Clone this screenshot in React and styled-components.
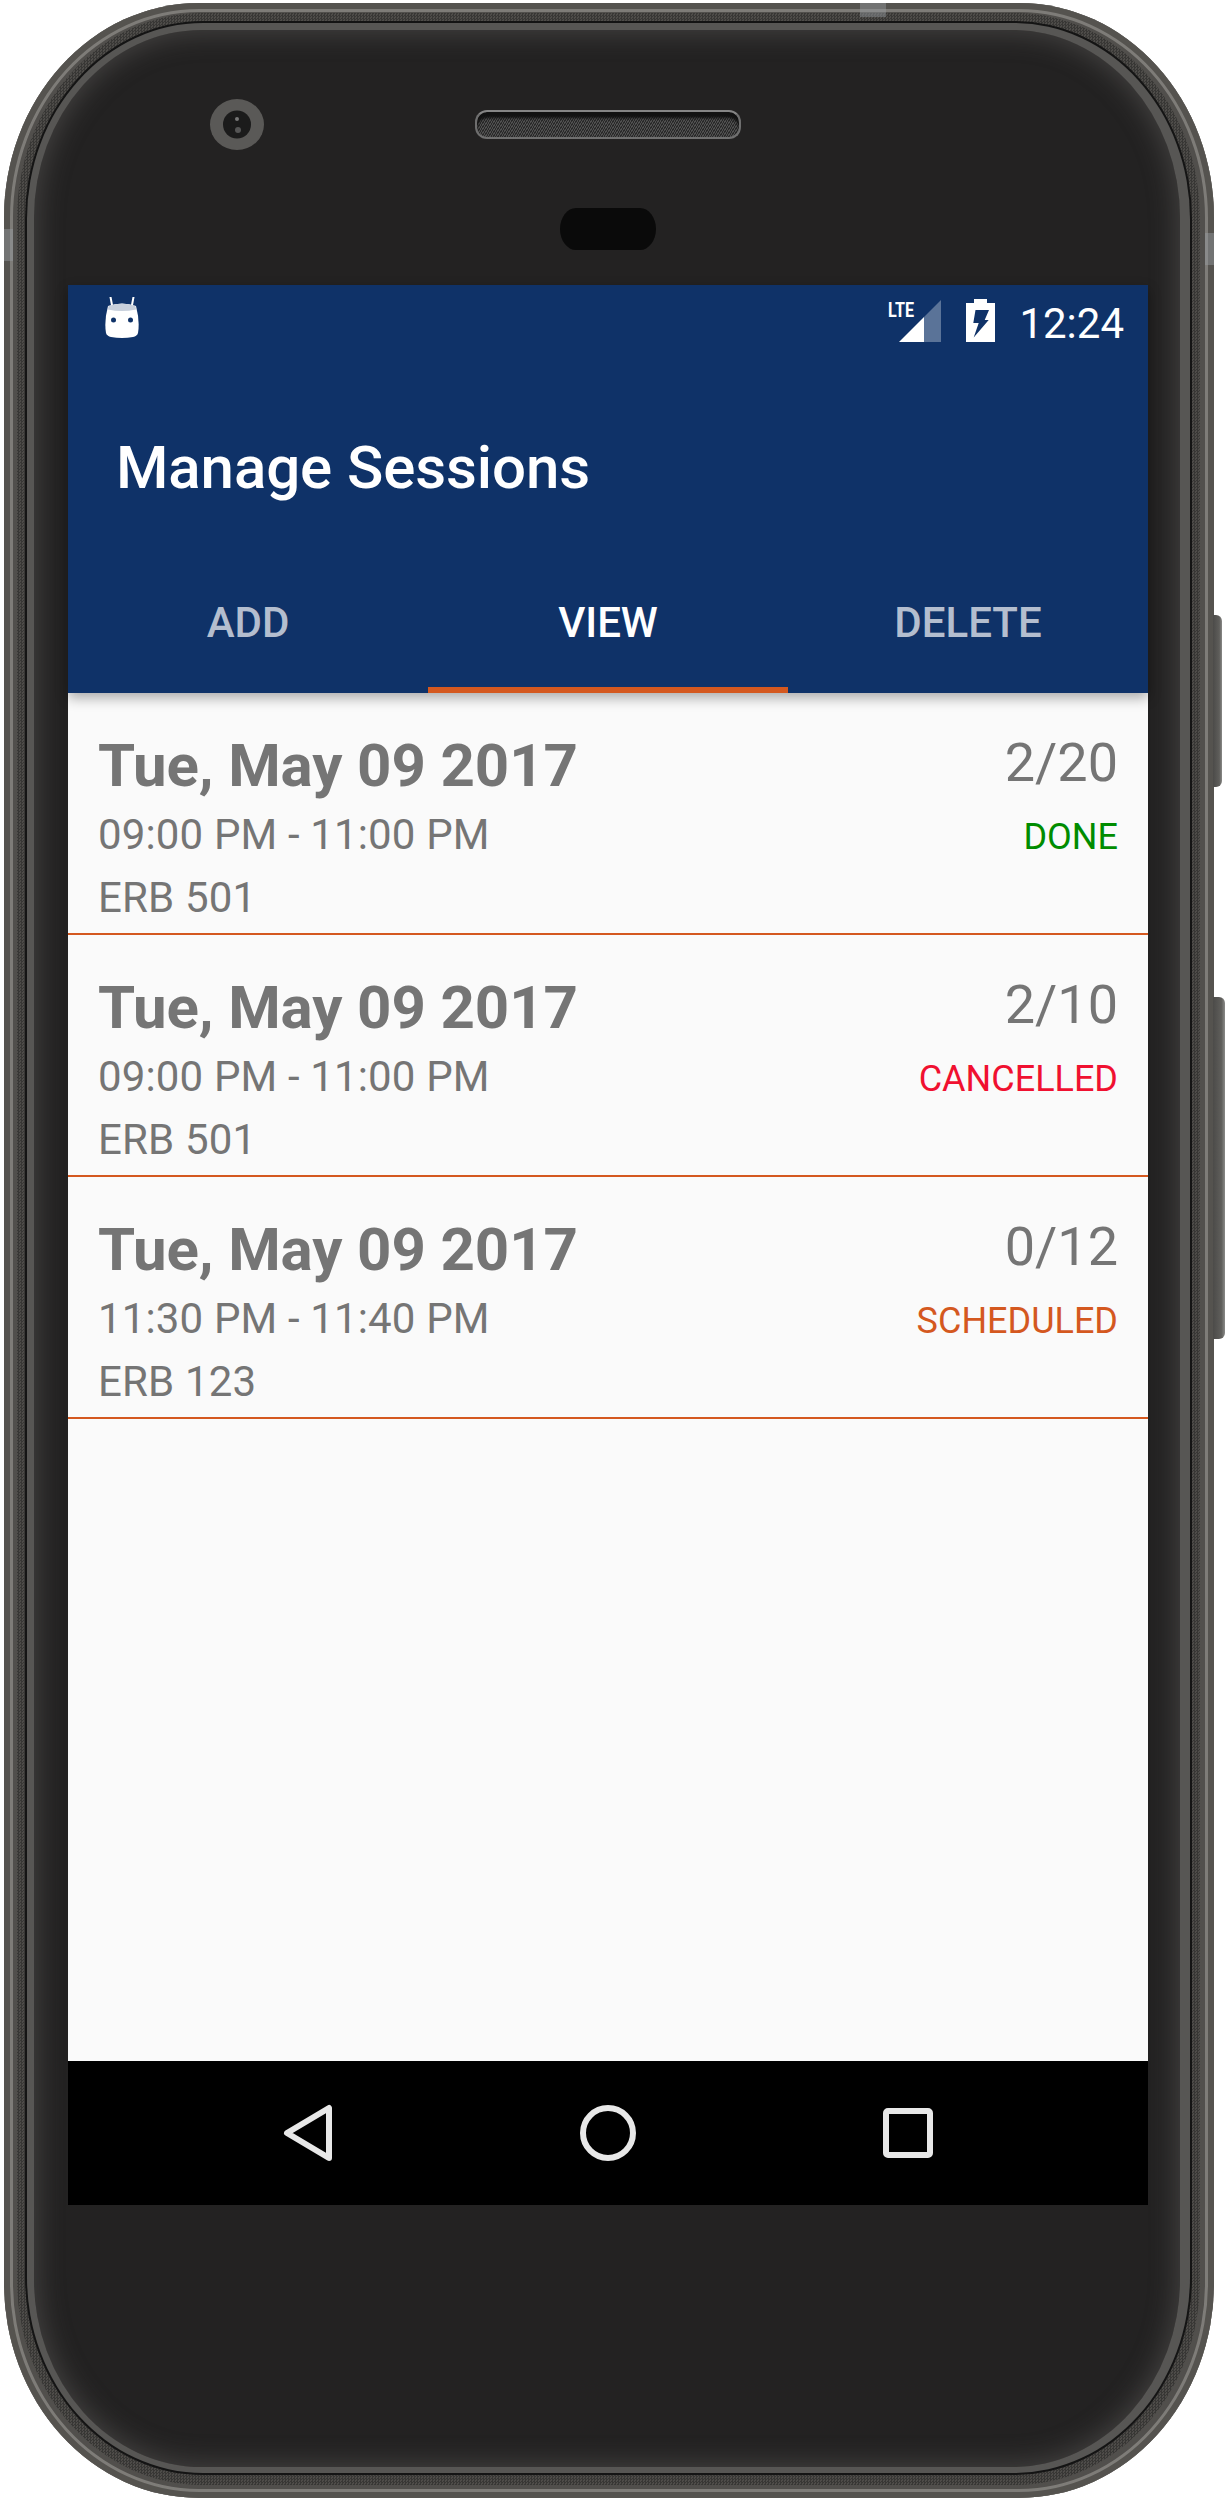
import React from 'react';
import styled, { createGlobalStyle } from 'styled-components';

const NAVY = '#0f3268';
const ORANGE = '#d4581f';
const GREY = '#757575';

const STATUS_COLORS = {
    DONE: '#008c00',
    CANCELLED: '#f01030',
    SCHEDULED: ORANGE,
};

const sessions = [
    { date: 'Tue, May 09 2017', time: '09:00 PM - 11:00 PM', room: 'ERB 501', count: '2/20', status: 'DONE' },
    { date: 'Tue, May 09 2017', time: '09:00 PM - 11:00 PM', room: 'ERB 501', count: '2/10', status: 'CANCELLED' },
    { date: 'Tue, May 09 2017', time: '11:30 PM - 11:40 PM', room: 'ERB 123', count: '0/12', status: 'SCHEDULED' },
];

const tabs = ['ADD', 'VIEW', 'DELETE'];

const GlobalStyle = createGlobalStyle`
    html, body {
        margin: 0;
        padding: 0;
        background: #fff;
    }
    * {
        box-sizing: border-box;
    }
`;

const Page = styled.div`
    width: 1226px;
    height: 2502px;
    padding: 3px 12px 4px 4px;
    font-family: Roboto, "Liberation Sans", sans-serif;
`;

const Device = styled.div`
    position: relative;
    width: 1210px;
    height: 2495px;
`;

const Rim = styled.div`
    height: 100%;
    padding: 10px 14px 13px 13px;
    border-radius: 195px / 215px;
    background: #514f4c;
    box-shadow: inset 0 0 0 6px #55534f, inset 0 0 0 9px #7e7c78;
`;

const Groove = styled.div`
    height: 100%;
    padding: 10px 10px 12px 10px;
    border-radius: 185px / 205px;
    background: repeating-conic-gradient(#383735 0 25%, #4e4c49 0 50%) 0 0 / 3px 3px;
`;

const Lip = styled.div`
    height: 100%;
    padding: 7px 10px 6px 7px;
    border-radius: 176px / 196px;
    background: #575654;
    box-shadow: 0 0 0 2px #141414;
`;

const Face = styled.div`
    height: 100%;
    padding: 0 32px 262px 34px;
    border-radius: 168px / 188px;
    background: #232222;
    box-shadow: inset 0 0 26px 4px rgba(115, 113, 110, 0.4);
`;

const TopBezel = styled.div`
    height: 255px;
    padding-top: 69px;
`;

const SensorRow = styled.div`
    display: grid;
    grid-template-columns: 1fr 266px 1fr;
    align-items: center;
`;

const Camera = styled.svg`
    width: 54px;
    height: 51px;
    margin-left: 142px;
`;

const Speaker = styled.div`
    width: 266px;
    height: 29px;
    border: 2px solid #6f6f6f;
    border-top-color: #858585;
    border-radius: 12px;
    background: repeating-linear-gradient(120deg, #2a2a2a 0 1px, #505050 1px 2px);
    box-shadow: inset 0 6px 3px #111;
`;

const Proximity = styled.div`
    width: 96px;
    height: 42px;
    margin: 58px auto 0;
    border-radius: 16px / 21px;
    background: #0a0a0a;
`;

const Screen = styled.div`
    display: flex;
    flex-direction: column;
    width: 1080px;
    height: 1920px;
    background: #fafafa;
`;

const AppHeader = styled.header`
    position: relative;
    z-index: 1;
    background: ${NAVY};
    box-shadow: 0 5px 12px rgba(0, 0, 0, 0.32);
`;

const StatusBar = styled.div`
    display: flex;
    justify-content: space-between;
    height: 72px;
    padding: 12px 24px 0 37px;
`;

const StatusRight = styled.div`
    display: flex;
    align-items: flex-start;
    padding-top: 2px;
`;

const BatteryIcon = styled.svg`
    width: 29px;
    height: 43px;
    margin-left: 25px;
`;

const Clock = styled.span`
    margin-left: 24px;
    color: #fff;
    font-size: 42px;
    line-height: 49px;
`;

const Toolbar = styled.div`
    height: 192px;
    padding: 76px 0 0 48px;
`;

const Title = styled.h1`
    margin: 0;
    color: #fff;
    font-size: 60px;
    font-weight: 500;
    line-height: 70px;
    letter-spacing: -0.1px;
`;

const TabBar = styled.nav`
    display: grid;
    grid-template-columns: repeat(3, 1fr);
    height: 144px;
`;

const Tab = styled.div`
    display: flex;
    align-items: center;
    justify-content: center;
    border-bottom: 6px solid ${(p) => (p.$active ? ORANGE : 'transparent')};
    padding-top: 8px;
    color: ${(p) => (p.$active ? '#fff' : 'rgba(255, 255, 255, 0.7)')};
    font-size: 42px;
    font-weight: 500;
`;

const SessionList = styled.div`
    flex: 1;
`;

const SessionRow = styled.div`
    display: flex;
    justify-content: space-between;
    height: 242px;
    padding: 38px 30px 0 30px;
    border-bottom: 2px solid ${ORANGE};
`;

const SessionInfo = styled.div`
    display: flex;
    flex-direction: column;
`;

const SessionDate = styled.div`
    color: ${GREY};
    font-size: 60px;
    font-weight: 700;
    line-height: 70px;
    letter-spacing: -0.1px;
`;

const SessionText = styled.div`
    margin-top: ${(p) => p.$gap}px;
    color: ${GREY};
    font-size: 42px;
    line-height: 49px;
    letter-spacing: 0.15px;
`;

const SessionMeta = styled.div`
    display: flex;
    flex-direction: column;
    align-items: flex-end;
`;

const Count = styled.div`
    color: ${GREY};
    font-size: 54px;
    line-height: 63px;
`;

const Status = styled.div`
    margin-top: 22px;
    color: ${(p) => STATUS_COLORS[p.$status]};
    font-size: 36px;
    line-height: 42px;
`;

const NavBar = styled.div`
    display: grid;
    grid-template-columns: repeat(3, 300px);
    justify-content: center;
    align-items: center;
    height: 144px;
    background: #000;
`;

const NavSlot = styled.div`
    display: flex;
    justify-content: center;
`;

const VolumeKey = styled.div`
    position: absolute;
    left: 100%;
    top: ${(p) => p.$top}px;
    width: ${(p) => p.$width}px;
    height: ${(p) => p.$height}px;
    margin-left: -1px;
    border-radius: 0 6px 6px 0;
    background: linear-gradient(90deg, #4c4b49, #5f5e5b 70%, #8a8a88);
`;

const AntennaBand = styled.div`
    position: absolute;
    left: ${(p) => p.$left}px;
    top: ${(p) => p.$top}px;
    width: ${(p) => p.$width}px;
    height: ${(p) => p.$height}px;
    background: rgba(150, 155, 160, 0.45);
`;

const CameraLens = () => (
    <Camera viewBox="0 0 54 51">
        <ellipse cx="27" cy="25.5" rx="27" ry="25.5" fill="#5a5957" />
        <ellipse cx="27" cy="25.5" rx="14" ry="14" fill="#1b1b1b" />
        <circle cx="27" cy="20" r="2" fill="#777" />
        <circle cx="28" cy="31" r="3" fill="#555" />
    </Camera>
);

const AndroidIcon = () => (
    <svg width="34" height="41" viewBox="0 0 34 41">
        <path d="M7 8 L5.5 0 M27 8 L28.5 0" stroke="#fff" strokeWidth="2" strokeLinecap="round" />
        <path d="M3 9 Q17 4 31 9 Q35 24 33 36 Q32 39 28 40 Q17 42 6 40 Q2 39 1 36 Q-1 24 3 9 Z" fill="#fff" />
        <path d="M3.5 9 Q17 4.5 30.5 9 L31 12.5 Q17 15.5 3 12.5 Z" fill="#c8d0dc" />
        <circle cx="8.5" cy="23" r="2.5" fill={NAVY} />
        <circle cx="25.5" cy="23" r="2.5" fill={NAVY} />
    </svg>
);

const SignalIcon = () => (
    <svg width="54" height="43" viewBox="0 0 54 43">
        <text x="1" y="18" fill="#fff" fontFamily="Roboto, sans-serif" fontSize="21" fontWeight="700" textLength="26" lengthAdjust="spacingAndGlyphs">LTE</text>
        <polygon points="12,43 37,18 37,43" fill="#fff" />
        <polygon points="37,18 54,1 54,43 37,43" fill="#5a7398" />
    </svg>
);

const ChargingIcon = () => (
    <BatteryIcon viewBox="0 0 29 43">
        <path d="M8 0 H21 V4 H29 V43 H0 V4 H8 Z" fill="#fff" />
        <path d="M9.5 11 H23 L18.7 21 H22.7 L7.7 38.5 L12.7 24 H7.3 Z" fill={NAVY} />
    </BatteryIcon>
);

const BackIcon = () => (
    <svg width="50" height="58" viewBox="0 0 50 58">
        <path d="M46 4 V54 L4 29 Z" fill="none" stroke="#e8e8e8" strokeWidth="6" strokeLinejoin="round" />
    </svg>
);

const HomeIcon = () => (
    <svg width="56" height="56" viewBox="0 0 56 56">
        <circle cx="28" cy="28" r="25" fill="none" stroke="#e8e8e8" strokeWidth="6" />
    </svg>
);

const RecentIcon = () => (
    <svg width="50" height="50" viewBox="0 0 50 50">
        <rect x="3" y="3" width="44" height="44" rx="2" fill="none" stroke="#e8e8e8" strokeWidth="6" />
    </svg>
);

const App = () => {
    return (
        <Page>
            <GlobalStyle />
            <Device>
                <Rim>
                    <Groove>
                        <Lip>
                            <Face>
                                <TopBezel>
                                    <SensorRow>
                                        <CameraLens />
                                        <Speaker />
                                    </SensorRow>
                                    <Proximity />
                                </TopBezel>
                                <Screen>
                                    <AppHeader>
                                        <StatusBar>
                                            <AndroidIcon />
                                            <StatusRight>
                                                <SignalIcon />
                                                <ChargingIcon />
                                                <Clock>12:24</Clock>
                                            </StatusRight>
                                        </StatusBar>
                                        <Toolbar>
                                            <Title>Manage Sessions</Title>
                                        </Toolbar>
                                        <TabBar>
                                            {tabs.map((t) => (
                                                <Tab key={t} $active={t === 'VIEW'}>{t}</Tab>
                                            ))}
                                        </TabBar>
                                    </AppHeader>
                                    <SessionList>
                                        {sessions.map((s) => (
                                            <SessionRow key={s.count}>
                                                <SessionInfo>
                                                    <SessionDate>{s.date}</SessionDate>
                                                    <SessionText $gap={9}>{s.time}</SessionText>
                                                    <SessionText $gap={14}>{s.room}</SessionText>
                                                </SessionInfo>
                                                <SessionMeta>
                                                    <Count>{s.count}</Count>
                                                    <Status $status={s.status}>{s.status}</Status>
                                                </SessionMeta>
                                            </SessionRow>
                                        ))}
                                    </SessionList>
                                    <NavBar>
                                        <NavSlot><BackIcon /></NavSlot>
                                        <NavSlot><HomeIcon /></NavSlot>
                                        <NavSlot><RecentIcon /></NavSlot>
                                    </NavBar>
                                </Screen>
                            </Face>
                        </Lip>
                    </Groove>
                </Rim>
                <VolumeKey $top={612} $width={9} $height={172} />
                <VolumeKey $top={994} $width={12} $height={342} />
                <AntennaBand $left={856} $top={0} $width={26} $height={14} />
                <AntennaBand $left={0} $top={226} $width={9} $height={32} />
                <AntennaBand $left={1201} $top={230} $width={9} $height={32} />
            </Device>
        </Page>
    );
};

export default App;
